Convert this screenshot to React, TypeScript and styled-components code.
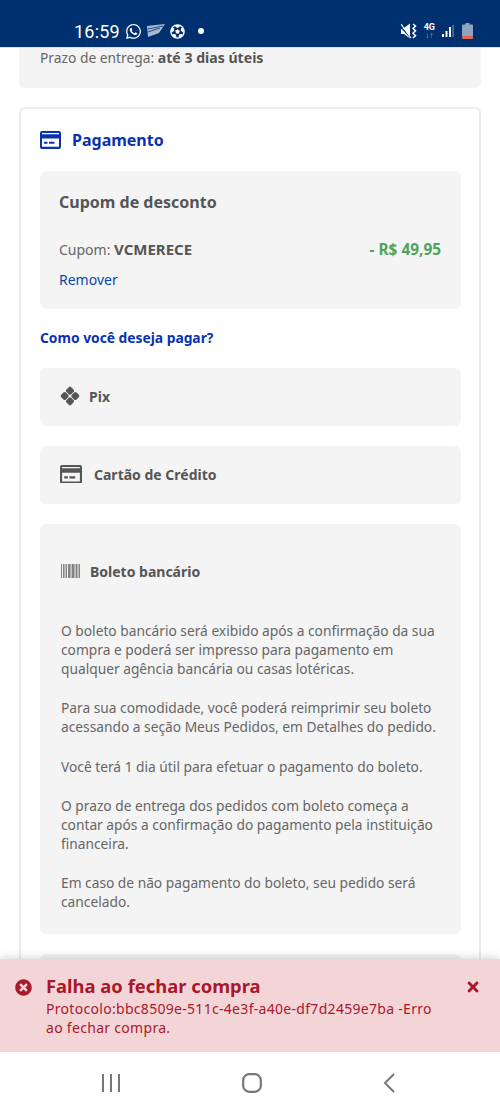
import styled, { createGlobalStyle } from "styled-components";
import { FaTimes, FaTimesCircle, FaWhatsapp, FaFutbol } from "react-icons/fa";

const GlobalStyle = createGlobalStyle`
  html, body {
    margin: 0;
    padding: 0;
    background: #fff;
  }
  * {
    box-sizing: border-box;
  }
  body {
    font-family: "Noto Sans", "Open Sans", sans-serif;
    color: #555;
  }
`;

function CardIcon({ color, size }: { color: string; size: number }) {
  return (
    <svg width={size} height={(size * 18) / 21} viewBox="0 0 21 18">
      <path
        fill={color}
        fillRule="evenodd"
        d="M2 0h17a2 2 0 0 1 2 2v14a2 2 0 0 1-2 2H2a2 2 0 0 1-2-2V2a2 2 0 0 1 2-2zM2 7.5v8.3h17V7.5zM2 2v1.2h17V2zM4 10.8h3.5v2H4zM9 10.8h5.5v2H9z"
      />
    </svg>
  );
}

function PixIcon() {
  return (
    <svg width="20" height="20" viewBox="-0.2 -0.2 20.4 20.4">
      <g fill="#555">
        <rect x="6.6" y="1.2" width="6.8" height="6.8" rx="1.8" transform="rotate(45 10 4.6)" />
        <rect x="6.6" y="12" width="6.8" height="6.8" rx="1.8" transform="rotate(45 10 15.4)" />
        <rect x="1.2" y="6.6" width="6.8" height="6.8" rx="1.8" transform="rotate(45 4.6 10)" />
        <rect x="12" y="6.6" width="6.8" height="6.8" rx="1.8" transform="rotate(45 15.4 10)" />
      </g>
    </svg>
  );
}

function BarcodeIcon() {
  const bars = [0, 2, 3.5, 5, 7, 8, 9.5, 11, 12, 13.5, 15, 16.5, 18];
  return (
    <svg width="19" height="14" viewBox="0 0 19 14">
      {bars.map((x) => (
        <rect key={x} x={x} y="0" width="0.9" height="14" fill="#777" />
      ))}
    </svg>
  );
}

function VibrateIcon() {
  return (
    <svg width="16" height="16" viewBox="0 0 16 16">
      <path fill="#fff" d="M0 5h3l6-4.5v15L3 11H0z" />
      <path stroke="#00306f" strokeWidth="1.6" d="M-1 3l11 12" />
      <path stroke="#fff" strokeWidth="1.2" d="M0 1l10 14" />
      <path
        fill="none"
        stroke="#fff"
        strokeWidth="1.5"
        d="M12 1l2.5 2-2.5 2.4 2.5 2.4-2.5 2.4 2.5 2.4-2.5 2.4"
      />
    </svg>
  );
}

function SignalIcon() {
  return (
    <svg width="13" height="12" viewBox="0 0 13 12">
      <rect x="0" y="9" width="2" height="3" fill="#fff" />
      <rect x="3.5" y="6" width="2" height="6" fill="#fff" />
      <rect x="7" y="2" width="2" height="10" fill="#fff" />
      <rect x="10.5" y="0" width="1.2" height="12" fill="#6d86ab" />
    </svg>
  );
}

function BatteryIcon() {
  return (
    <svg width="11" height="16" viewBox="0 0 11 16">
      <rect x="3.5" y="0" width="4" height="2" fill="#8fa3bf" />
      <rect x="0" y="1.5" width="11" height="12" rx="1" fill="#8fa3bf" />
      <rect x="0" y="13" width="11" height="3" rx="1" fill="#e0674f" />
    </svg>
  );
}

function NotificationIcon() {
  return (
    <svg width="18" height="14" viewBox="0 0 18 14">
      <path fill="#a9b8cf" d="M0 2l18-2-6 9-11 4z" />
      <path stroke="#00306f" strokeWidth="0.8" d="M1 5l15-3M1 8l12-4" />
    </svg>
  );
}

function NavRecentsIcon() {
  return (
    <svg width="18" height="18" viewBox="0 0 18 18">
      <path stroke="#777" strokeWidth="2" d="M1 0v18M9 0v18M17 0v18" />
    </svg>
  );
}

function NavHomeIcon() {
  return (
    <svg width="20" height="20" viewBox="0 0 20 20">
      <rect x="1.2" y="1.2" width="17.6" height="17.6" rx="6" fill="none" stroke="#777" strokeWidth="2.2" />
    </svg>
  );
}

function NavBackIcon() {
  return (
    <svg width="12" height="20" viewBox="0 0 12 20">
      <path d="M11 1L2 10l9 9" fill="none" stroke="#777" strokeWidth="2" />
    </svg>
  );
}

function App() {
  return (
    <Screen>
      <GlobalStyle />
      <StatusBar>
        <StatusLeft>
          <Clock>16:59</Clock>
          <FaWhatsapp size={17} color="#fff" />
          <NotificationIcon />
          <FaFutbol size={15} color="#fff" />
          <StatusDot />
        </StatusLeft>
        <StatusRight>
          <VibrateIcon />
          <NetworkLabel>
            4G
            <small>↓↑</small>
          </NetworkLabel>
          <SignalIcon />
          <BatteryIcon />
        </StatusRight>
      </StatusBar>

      <Content>
        <DeliveryBox>
          Prazo de entrega: <strong>até 3 dias úteis</strong>
        </DeliveryBox>

        <Card>
          <CardTitle>
            <CardIcon color="#0a32b0" size={21} />
            Pagamento
          </CardTitle>

          <CouponPanel>
            <CouponTitle>Cupom de desconto</CouponTitle>
            <CouponRow>
              <span>
                Cupom: <strong>VCMERECE</strong>
              </span>
              <Discount>- R$ 49,95</Discount>
            </CouponRow>
            <RemoveLink>Remover</RemoveLink>
          </CouponPanel>

          <PayQuestion>Como você deseja pagar?</PayQuestion>

          <OptionPanel>
            <PixIcon />
            Pix
          </OptionPanel>
          <OptionPanel $gap={12}>
            <CardIcon color="#555" size={22} />
            Cartão de Crédito
          </OptionPanel>

          <BoletoPanel>
            <BoletoHead>
              <BarcodeIcon />
              Boleto bancário
            </BoletoHead>
            <BoletoText>
              O boleto bancário será exibido após a confirmação da sua compra e poderá ser
              impresso para pagamento em qualquer agência bancária ou casas lotéricas.
            </BoletoText>
            <BoletoText>
              Para sua comodidade, você poderá reimprimir seu boleto acessando a seção Meus
              Pedidos, em Detalhes do pedido.
            </BoletoText>
            <BoletoText>Você terá 1 dia útil para efetuar o pagamento do boleto.</BoletoText>
            <BoletoText>
              O prazo de entrega dos pedidos com boleto começa a contar após a confirmação do
              pagamento pela instituição financeira.
            </BoletoText>
            <BoletoText>Em caso de não pagamento do boleto, seu pedido será cancelado.</BoletoText>
          </BoletoPanel>

          <OptionPanel />
        </Card>

        <Toast>
          <ToastIcon>
            <FaTimesCircle size={17} color="#a9182b" />
          </ToastIcon>
          <ToastBody>
            <ToastTitle>Falha ao fechar compra</ToastTitle>
            <ToastMessage>
              Protocolo:bbc8509e-511c-4e3f-a40e-df7d2459e7ba -Erro ao fechar compra.
            </ToastMessage>
          </ToastBody>
          <ToastClose>
            <FaTimes size={16} color="#a9182b" />
          </ToastClose>
        </Toast>
      </Content>

      <NavBar>
        <NavRecentsIcon />
        <NavHomeIcon />
        <NavBackIcon />
      </NavBar>
    </Screen>
  );
}

const Screen = styled.div`
  width: 500px;
  height: 1111px;
  display: flex;
  flex-direction: column;
  overflow: hidden;
  background: #fff;
`;

const StatusBar = styled.div`
  flex: none;
  height: 48px;
  padding: 20px 27px 0 74px;
  display: flex;
  justify-content: space-between;
  align-items: flex-start;
  background: #00306f;
  border-bottom: 1px solid #d5e3f2;
  color: #fff;
`;

const StatusLeft = styled.div`
  display: flex;
  align-items: center;
  gap: 5px;
  height: 22px;
`;

const Clock = styled.span`
  font-family: Roboto, sans-serif;
  font-size: 18px;
  letter-spacing: 0.2px;
`;

const StatusDot = styled.i`
  width: 6px;
  height: 6px;
  margin-left: 8px;
  border-radius: 50%;
  background: #fff;
`;

const StatusRight = styled.div`
  display: flex;
  align-items: center;
  gap: 7px;
  height: 22px;
`;

const NetworkLabel = styled.span`
  display: flex;
  flex-direction: column;
  align-items: center;
  font-family: Roboto, sans-serif;
  font-size: 9px;
  font-weight: 700;
  line-height: 9px;

  small {
    font-size: 8px;
    line-height: 7px;
    color: #8fa3bf;
  }
`;

const Content = styled.div`
  position: relative;
  flex: 1;
  min-height: 0;
  padding: 0 19px;
  overflow: hidden;
`;

const DeliveryBox = styled.div`
  height: 40px;
  padding: 0 21px;
  background: #f4f4f4;
  border-radius: 0 0 6px 6px;
  font-size: 13.8px;
  line-height: 20px;
  color: #666;

  strong {
    font-size: 14.1px;
    font-weight: 700;
    color: #555;
  }
`;

const Card = styled.div`
  margin-top: 19px;
  padding: 19px 18px 0 19px;
  border: 2px solid #ececec;
  border-bottom: 0;
  border-radius: 6px 6px 0 0;
  background: #fff;
`;

const CardTitle = styled.h2`
  display: flex;
  align-items: center;
  gap: 11px;
  margin: 0 0 19px;
  height: 24px;
  font-size: 16px;
  font-weight: 700;
  color: #0a32b0;
`;

const CouponPanel = styled.div`
  height: 138px;
  padding: 20px 20px 0 19px;
  background: #f4f4f4;
  border-radius: 6px;
`;

const CouponTitle = styled.div`
  font-size: 16px;
  font-weight: 700;
  line-height: 22px;
  color: #555;
`;

const CouponRow = styled.div`
  display: flex;
  justify-content: space-between;
  align-items: baseline;
  margin-top: 26px;
  font-size: 14px;
  line-height: 20px;
  color: #666;

  strong {
    font-size: 15px;
    font-weight: 700;
    color: #555;
  }
`;

const Discount = styled.span`
  font-size: 15.4px;
  font-weight: 700;
  color: #4ea55a;
`;

const RemoveLink = styled.div`
  margin-top: 10px;
  font-size: 14px;
  line-height: 20px;
  color: #0a47a8;
`;

const PayQuestion = styled.div`
  margin: 19px 0 20px;
  font-size: 13.8px;
  font-weight: 700;
  line-height: 20px;
  color: #0a32b0;
`;

const OptionPanel = styled.div<{ $gap?: number }>`
  display: flex;
  align-items: center;
  gap: ${(props) => props.$gap ?? 9}px;
  height: 58px;
  margin-bottom: 20px;
  padding: 0 20px 2px;
  background: #f4f4f4;
  border-radius: 6px;
  font-size: 14px;
  font-weight: 700;
  color: #555;
`;

const BoletoPanel = styled.div`
  height: 410px;
  margin-bottom: 20px;
  padding: 37px 20px 0 21px;
  background: #f4f4f4;
  border-radius: 6px;
`;

const BoletoHead = styled.div`
  display: flex;
  align-items: center;
  gap: 10px;
  height: 20px;
  margin-bottom: 40px;
  font-size: 14px;
  font-weight: 700;
  color: #555;
`;

const BoletoText = styled.p`
  margin: 0 0 20.25px;
  font-size: 13.75px;
  line-height: 19px;
  color: #666;
`;

const Toast = styled.div`
  position: absolute;
  left: 0;
  right: 0;
  bottom: 0;
  height: 93px;
  display: flex;
  align-items: flex-start;
  padding: 14px 19px 0 15px;
  background: #f4d5d7;
  box-shadow: 0 -2px 8px rgba(0, 0, 0, 0.15);
`;

const ToastIcon = styled.div`
  flex: none;
  width: 31px;
  padding-top: 6px;
  line-height: 0;
`;

const ToastBody = styled.div`
  flex: 1;
  padding-right: 22px;
`;

const ToastTitle = styled.div`
  font-size: 18.4px;
  font-weight: 700;
  line-height: 26px;
  color: #a9182b;
`;

const ToastMessage = styled.div`
  font-size: 14px;
  letter-spacing: 0.3px;
  line-height: 19px;
  color: #a9182b;
`;

const ToastClose = styled.div`
  flex: none;
  padding-top: 6px;
  line-height: 0;
`;

const NavBar = styled.div`
  flex: none;
  height: 59px;
  display: flex;
  justify-content: space-between;
  align-items: center;
  padding: 3px 105px 0 102px;
  background: #fff;
`;

export default App;
